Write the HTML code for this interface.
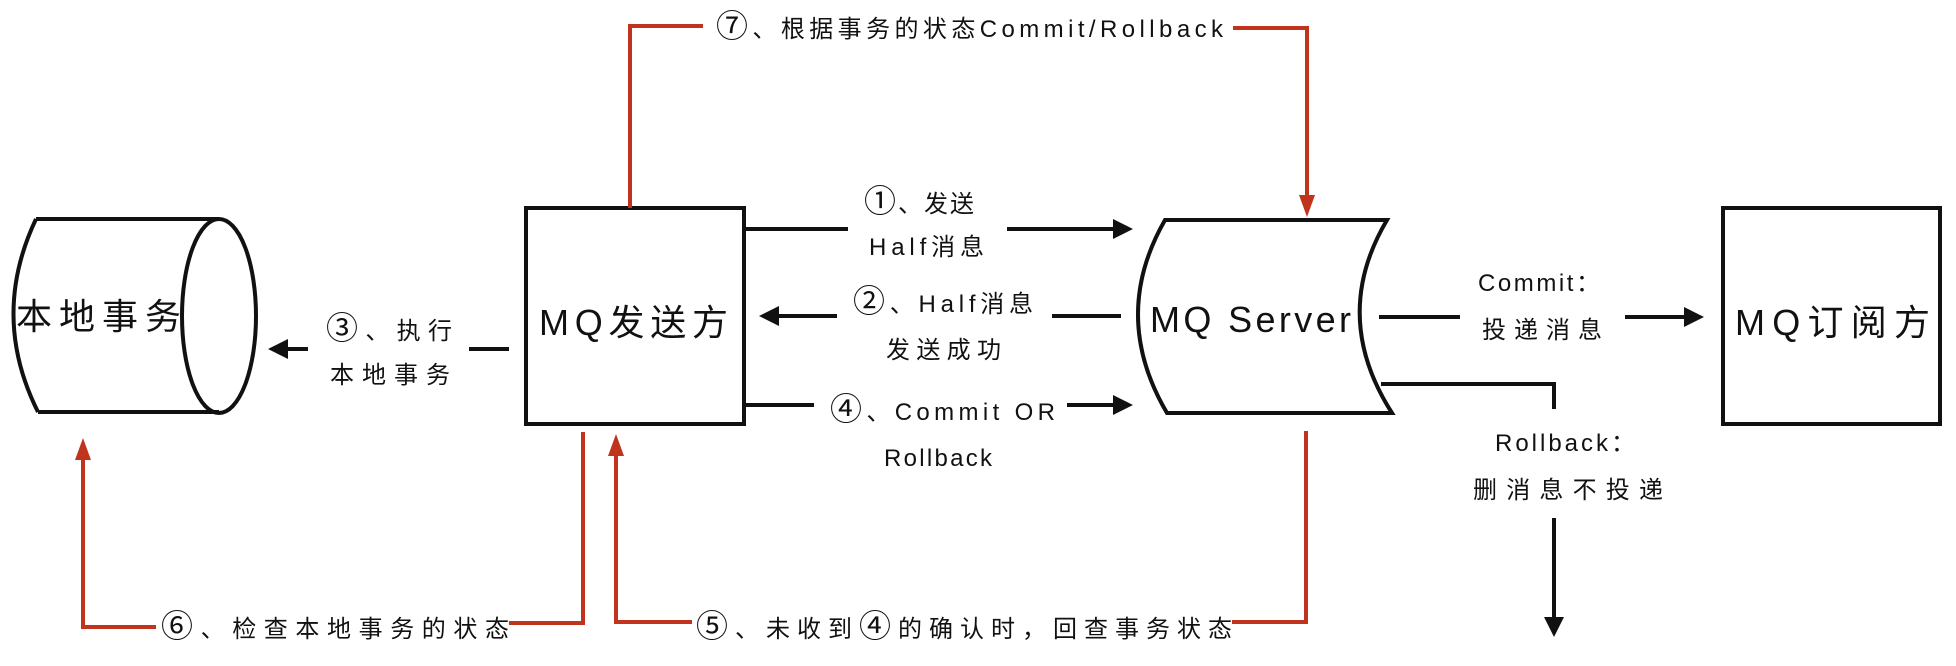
<!DOCTYPE html>
<html><head><meta charset="utf-8"><style>
html,body{margin:0;padding:0;background:#fff;width:1956px;height:666px;overflow:hidden}
svg{display:block}
text{font-family:"Liberation Sans","Noto Sans CJK SC",sans-serif;fill:#111}
.l{font-size:24px}
.b{font-size:36px}
.c{font-size:32px}
</style></head><body>
<svg width="1956" height="666" viewBox="0 0 1956 666" xmlns="http://www.w3.org/2000/svg">
<g fill="none" stroke="#111" stroke-width="4">
<path d="M36 219 Q-10 316 38 412"/>
<line x1="36" y1="219" x2="219" y2="219"/>
<line x1="38" y1="412" x2="219" y2="412"/>
<ellipse cx="219" cy="316" rx="37" ry="97"/>
<rect x="526" y="208" width="218" height="216"/>
<path d="M1165 220 L1387 220 Q1330 316 1392 413 L1167 413 Q1110 316 1165 220 Z"/>
<rect x="1723" y="208" width="217" height="216"/>
<line x1="746" y1="229" x2="848" y2="229"/>
<line x1="1007" y1="229" x2="1118" y2="229"/>
<line x1="775" y1="316" x2="837" y2="316"/>
<line x1="1052" y1="316" x2="1121" y2="316"/>
<line x1="746" y1="405" x2="814" y2="405"/>
<line x1="1067" y1="405" x2="1118" y2="405"/>
<line x1="284" y1="349" x2="308" y2="349"/>
<line x1="469" y1="349" x2="509" y2="349"/>
<line x1="1379" y1="317" x2="1460" y2="317"/>
<line x1="1625" y1="317" x2="1690" y2="317"/>
<path d="M1381 384 L1554 384 L1554 409"/>
<line x1="1554" y1="518" x2="1554" y2="620"/>
</g>
<g fill="#111">
<polygon points="1133,229 1113,219 1113,239"/>
<polygon points="1133,405 1113,395 1113,415"/>
<polygon points="759,316 779,306 779,326"/>
<polygon points="268,349 288,339 288,359"/>
<polygon points="1704,317 1684,307 1684,327"/>
<polygon points="1554,637 1544,617 1564,617"/>
</g>
<g fill="none" stroke="#c0341d" stroke-width="4">
<path d="M630 208 L630 26 L703 26"/>
<path d="M1233 28 L1307 28 L1307 200"/>
<path d="M583 432 L583 623 L509 623"/>
<path d="M156 627 L83 627 L83 455"/>
<path d="M616 450 L616 622 L692 622"/>
<path d="M1232 622 L1306 622 L1306 431"/>
</g>
<g fill="#c0341d">
<polygon points="1307,217 1299,195 1315,195"/>
<polygon points="83,438 75,460 91,460"/>
<polygon points="616,434 608,456 624,456"/>
</g>
<text class="b" x="16" y="329" textLength="165" lengthAdjust="spacing">本地事务</text>
<text class="b" x="539" y="335" textLength="189" lengthAdjust="spacing">MQ发送方</text>
<text class="b" x="1150" y="332" textLength="201" lengthAdjust="spacing">MQ Server</text>
<text class="b" x="1735" y="335" textLength="195" lengthAdjust="spacing">MQ订阅方</text>
<text class="l" x="716" y="37" textLength="507" lengthAdjust="spacing"><tspan class="c">⑦</tspan>、根据事务的状态Commit/Rollback</text>
<text class="l" x="864" y="212" textLength="110" lengthAdjust="spacing"><tspan class="c">①</tspan>、发送</text>
<text class="l" x="869" y="255" textLength="115" lengthAdjust="spacing">Half消息</text>
<text class="l" x="853" y="312" textLength="180" lengthAdjust="spacing"><tspan class="c">②</tspan>、Half消息</text>
<text class="l" x="886" y="358" textLength="115" lengthAdjust="spacing">发送成功</text>
<text class="l" x="830" y="420" textLength="225" lengthAdjust="spacing"><tspan class="c">④</tspan>、Commit OR</text>
<text class="l" x="884" y="466" textLength="108" lengthAdjust="spacing">Rollback</text>
<text class="l" x="326" y="339" textLength="126" lengthAdjust="spacing"><tspan class="c">③</tspan>、执行</text>
<text class="l" x="330" y="383" textLength="120" lengthAdjust="spacing">本地事务</text>
<text class="l" x="1478" y="291" textLength="122" lengthAdjust="spacing">Commit：</text>
<text class="l" x="1482" y="338" textLength="120" lengthAdjust="spacing">投递消息</text>
<text class="l" x="1495" y="451" textLength="140" lengthAdjust="spacing">Rollback：</text>
<text class="l" x="1473" y="498" textLength="190" lengthAdjust="spacing">删消息不投递</text>
<text class="l" x="161" y="637" textLength="348" lengthAdjust="spacing"><tspan class="c">⑥</tspan>、检查本地事务的状态</text>
<text class="l" x="696" y="637" textLength="536" lengthAdjust="spacing"><tspan class="c">⑤</tspan>、未收到<tspan class="c">④</tspan>的确认时，回查事务状态</text>
</svg>
</body></html>
